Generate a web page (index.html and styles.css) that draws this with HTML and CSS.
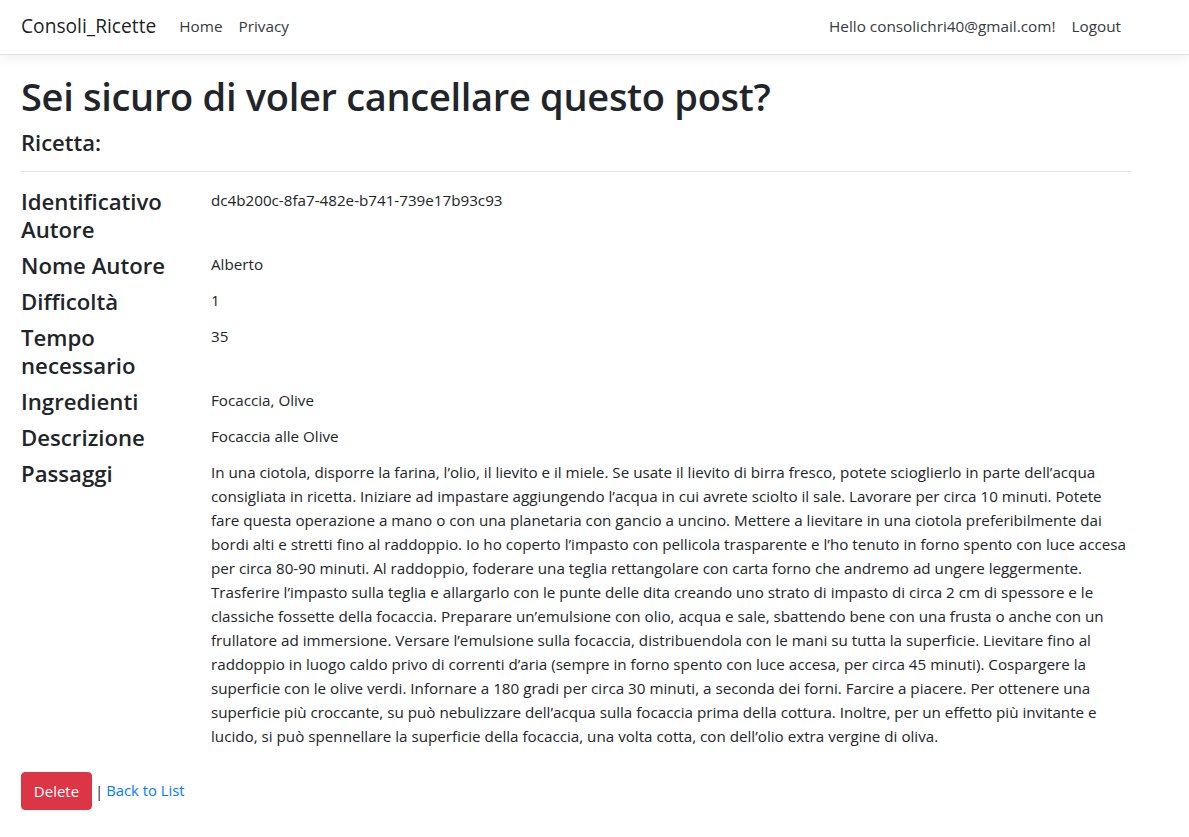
FILE: index.html
```html
<!DOCTYPE html>
<html lang="it">
<head>
<meta charset="utf-8">
<title>Delete - Consoli_Ricette</title>
<link rel="stylesheet" href="styles.css">
</head>
<body>
<header>
  <nav class="navbar">
    <div class="nav-inner">
      <a class="brand" href="#">Consoli_Ricette</a>
      <ul class="nav-left">
        <li><a class="nav-link" href="#">Home</a></li>
        <li><a class="nav-link" href="#">Privacy</a></li>
      </ul>
      <ul class="nav-right">
        <li><a class="nav-link" href="#">Hello consolichri40@gmail.com!</a></li>
        <li><a class="nav-link" href="#">Logout</a></li>
      </ul>
    </div>
  </nav>
</header>
<div class="container">
  <main>
    <h1 class="title">Sei sicuro di voler cancellare questo post?</h1>
    <div>
      <h4 class="subtitle">Ricetta:</h4>
      <hr class="sep">
      <dl class="details">
        <dt>Identificativo Autore</dt>
        <dd>dc4b200c-8fa7-482e-b741-739e17b93c93</dd>
        <dt>Nome Autore</dt>
        <dd>Alberto</dd>
        <dt>Difficoltà</dt>
        <dd>1</dd>
        <dt>Tempo necessario</dt>
        <dd>35</dd>
        <dt>Ingredienti</dt>
        <dd>Focaccia, Olive</dd>
        <dt>Descrizione</dt>
        <dd>Focaccia alle Olive</dd>
        <dt>Passaggi</dt>
        <dd>In una ciotola, disporre la farina, l’olio, il lievito e il miele. Se usate il lievito di birra fresco, potete scioglierlo in parte dell’acqua consigliata in ricetta. Iniziare ad impastare aggiungendo l’acqua in cui avrete sciolto il sale. Lavorare per circa 10 minuti. Potete fare questa operazione a mano o con una planetaria con gancio a uncino. Mettere a lievitare in una ciotola preferibilmente dai bordi alti e stretti fino al raddoppio. Io ho coperto l’impasto con pellicola trasparente e l’ho tenuto in forno spento con luce accesa per circa 80-90 minuti. Al raddoppio, foderare una teglia rettangolare con carta forno che andremo ad ungere leggermente. Trasferire l’impasto sulla teglia e allargarlo con le punte delle dita creando uno strato di impasto di circa 2 cm di spessore e le classiche fossette della focaccia. Preparare un’emulsione con olio, acqua e sale, sbattendo bene con una frusta o anche con un frullatore ad immersione. Versare l’emulsione sulla focaccia, distribuendola con le mani su tutta la superficie. Lievitare fino al raddoppio in luogo caldo privo di correnti d’aria (sempre in forno spento con luce accesa, per circa 45 minuti). Cospargere la superficie con le olive verdi. Infornare a 180 gradi per circa 30 minuti, a seconda dei forni. Farcire a piacere. Per ottenere una superficie più croccante, su può nebulizzare dell’acqua sulla focaccia prima della cottura. Inoltre, per un effetto più invitante e lucido, si può spennellare la superficie della focaccia, una volta cotta, con dell’olio extra vergine di oliva.</dd>
      </dl>
      <form class="actions">
        <button type="button" class="btn-delete">Delete</button>
        <span class="pipe">|</span>
        <a class="back" href="#">Back to List</a>
      </form>
    </div>
  </main>
</div>
</body>
</html>
```
FILE: styles.css
```css
* { box-sizing: border-box; }
html, body { margin: 0; padding: 0; }
body {
  font-family: "Open Sans", "Noto Sans", sans-serif;
  font-size: 15px;
  line-height: 24px;
  color: #212529;
  background: #fff;
}
a { text-decoration: none; }

.navbar {
  height: 55px;
  border-bottom: 1px solid #dee2e6;
  box-shadow: 0 4px 10px rgba(0,0,0,0.05);
  background: #fff;
}
.nav-inner {
  display: flex;
  align-items: center;
  height: 51px;
  padding: 0 21px;
  width: 1142px;
}
.brand {
  font-size: 19.2px;
  color: rgba(0,0,0,0.9);
  margin-right: 17px;
  line-height: 28px;
}
.nav-left, .nav-right {
  list-style: none;
  margin: 0;
  padding: 0;
  display: flex;
}
.nav-right { margin-left: auto; }
.nav-link {
  display: block;
  padding: 8px 8px;
  font-size: 15.3px;
  color: #343a40;
}
.nav-left li:first-child .nav-link { padding-left: 6px; }
.nav-right li:last-child .nav-link { padding-right: 0; }

.container {
  padding: 0 21px;
  width: 1152px;
}
main { padding-bottom: 16px; }

.title {
  margin: 17px 0 8px;
  font-size: 38px;
  font-weight: 600;
  line-height: 48px;
  letter-spacing: -0.3px;
}
.subtitle {
  margin: 0;
  font-size: 22px;
  font-weight: 600;
  line-height: 28px;
}
.sep {
  margin: 15px 0 16px;
  border: 0;
  border-top: 1px solid rgba(0,0,0,0.1);
}

.details {
  display: grid;
  grid-template-columns: 190px 1fr;
  margin: 0 0 16px;
}
.details dt {
  font-size: 22.2px;
  font-weight: 600;
  line-height: 28px;
  margin-bottom: 8px;
  padding-right: 15px;
}
.details dd {
  margin: 0 0 8px;
  font-size: 15.2px;
  line-height: 24px;
}

.actions {
  display: flex;
  align-items: center;
  margin: 0;
}
.btn-delete {
  font-family: inherit;
  font-size: 15px;
  color: #fff;
  background: #dc3545;
  border: 1px solid #dc3545;
  border-radius: 4px;
  height: 38px;
  width: 71px;
  padding: 0;
  cursor: pointer;
}
.pipe {
  margin: 0 3px 0 3px;
  color: #212529;
}
.back {
  color: #007bff;
  font-size: 14.8px;
  position: relative;
  top: -1px;
}
```
